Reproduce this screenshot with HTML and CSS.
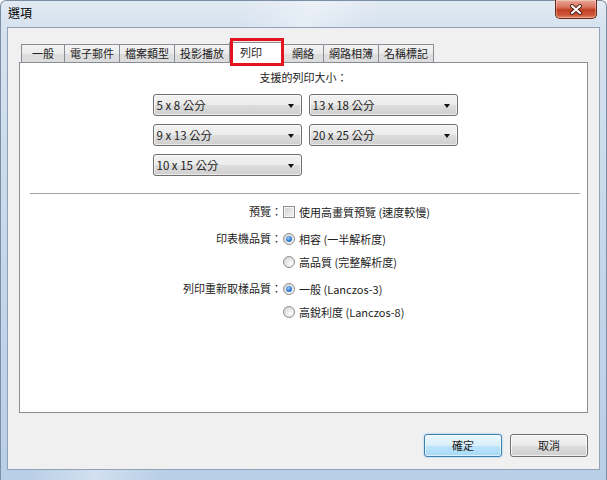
FILE: index.html
```html
<!DOCTYPE html>
<html lang="zh-Hant">
<head>
    <meta charset="utf-8" />
    <title>選項</title>
    <link rel="stylesheet" href="styles.css">
</head>
<body>

<div class="window">
    <div class="titlebar">
        <span class="title">選項</span>
        <span class="close">
            <svg width="14" height="11" viewBox="0 0 14 11">
                <path d="M3 2 L11 9 M11 2 L3 9" stroke="#4b1a10" stroke-width="4" stroke-linecap="round" />
                <path d="M3 2 L11 9 M11 2 L3 9" stroke="#fff" stroke-width="2.2" stroke-linecap="round" />
            </svg>
        </span>
    </div>

    <div class="client">
        <!-- tab strip -->
        <div class="tabs">
            <div class="tab first">一般</div>
            <div class="tab">電子郵件</div>
            <div class="tab">檔案類型</div>
            <div class="tab">投影播放</div>
            <div class="tab selected">列印</div>
            <div class="tab short">網絡</div>
            <div class="tab">網路相簿</div>
            <div class="tab last">名稱標記</div>
        </div>

        <div class="panel">
            <p class="heading">支援的列印大小：</p>
            <div class="sizes">
                <div class="select">5 x 8 公分</div>
                <div class="select">13 x 18 公分</div>
                <div class="select">9 x 13 公分</div>
                <div class="select">20 x 25 公分</div>
                <div class="select">10 x 15 公分</div>
            </div>

            <div class="divider"></div>

            <div class="fields">
                <div class="field">
                    <span class="label">預覽：</span>
                    <div class="choices">
                        <div class="choice"><span class="checkbox"></span>使用高畫質預覽 (速度較慢)</div>
                    </div>
                </div>
                <div class="field">
                    <span class="label">印表機品質：</span>
                    <div class="choices">
                        <div class="choice"><span class="radio on"></span>相容 (一半解析度)</div>
                        <div class="choice"><span class="radio"></span>高品質 (完整解析度)</div>
                    </div>
                </div>
                <div class="field">
                    <span class="label">列印重新取樣品質：</span>
                    <div class="choices">
                        <div class="choice"><span class="radio on"></span>一般 (Lanczos-3)</div>
                        <div class="choice"><span class="radio"></span>高銳利度 (Lanczos-8)</div>
                    </div>
                </div>
            </div>
        </div>

        <div class="buttons">
            <span class="btn default">確定</span>
            <span class="btn">取消</span>
        </div>
    </div>
</div>

</body>
</html>
```

FILE: styles.css
```css
    /* Reset and base font
    ---------------------------------------------------------------- */
    html, body {
        margin: 0;
        padding: 0;
        }
    body {
        font-family: "Noto Sans CJK TC", "Noto Sans", sans-serif;
        font-size: 11px;
        color: #222;
        background: #fff;
        }
    p {
        margin: 0;
        }

    /* Window frame (aero glass)
    ---------------------------------------------------------------- */
    .window {
        width: 607px;
        height: 480px;
        box-sizing: border-box;
        padding: 0 6px 10px;
        border: 1px solid #7c8ea3;
        border-bottom: 0;
        border-radius: 6px 6px 0 0;
        display: flex;
        flex-direction: column;
        background:
            linear-gradient(115deg, rgba(255,255,255,0) 30%, rgba(255,255,255,.35) 38%, rgba(255,255,255,0) 46%),
            linear-gradient(180deg, #e2eaf3 0, #d6e2ef 27px, #c3d6ea 60%, #b9cfe7 100%);
        }
    .titlebar {
        height: 27px;
        display: flex;
        align-items: flex-start;
        }
    .title {
        padding: 4px 0 0 1px;
        font-size: 12px;
        line-height: 16px;
        color: #000;
        }
    .close {
        margin: -1px 3px 0 auto;
        width: 42px;
        height: 19px;
        box-sizing: border-box;
        border: 1px solid #6b2a1c;
        border-top: 0;
        border-radius: 0 0 5px 5px;
        display: flex;
        align-items: center;
        justify-content: center;
        background: linear-gradient(180deg, #e9a999 0, #d9735c 40%, #c13f22 55%, #cf5a3c 85%, #e48a6a 100%);
        box-shadow: inset 0 0 0 1px rgba(255,255,255,.3);
        }

    /* Client area
    ---------------------------------------------------------------- */
    .client {
        flex: 1;
        display: flex;
        flex-direction: column;
        padding: 14px 11px 12px;
        border: 1px solid #8fa2b8;
        background: #f0f0f0;
        }

    /* Tabs */
    .tabs {
        display: flex;
        align-items: flex-end;
        height: 20px;
        margin-left: 2px;
        }
    .tab {
        height: 18px;
        box-sizing: border-box;
        padding: 0 5px;
        line-height: 17px;
        border: 1px solid #898c95;
        border-right: 0;
        border-bottom: 0;
        background: linear-gradient(180deg, #f3f3f3 0, #ebebeb 50%, #dedede 51%, #dcdcdc 100%);
        white-space: nowrap;
        }
    .tab.first { padding: 0 10px; }
    .tab.short { padding: 0 9px; }
    .tab.last  { border-right: 1px solid #898c95; }
    .tab.selected {
        position: relative;
        z-index: 1;
        height: 21px;
        margin-bottom: -1px;
        padding: 0 20px 0 10px;
        line-height: 18px;
        background: #fff;
        }
    /* red highlight round the active tab */
    .tab.selected:after {
        content: "";
        position: absolute;
        top: -5px;
        left: 0;
        right: -2px;
        bottom: -3px;
        border: 3px solid #e3141d;
        }

    .panel {
        height: 351px;
        box-sizing: border-box;
        border: 1px solid #898c95;
        background: #fff;
        }
    .heading {
        margin-top: 5px;
        line-height: 18px;
        text-align: center;
        }

    /* Size drop downs */
    .sizes {
        margin-top: 8px;
        display: grid;
        grid-template-columns: 149px 149px;
        grid-auto-rows: 22px;
        column-gap: 7px;
        row-gap: 8px;
        justify-content: center;
        padding-left: 3px;
        }
    .select {
        position: relative;
        box-sizing: border-box;
        padding-left: 3px;
        line-height: 20px;
        font-size: 11.5px;
        border: 1px solid #707070;
        border-radius: 3px;
        background: linear-gradient(180deg, #f2f2f2 0, #ebebeb 50%, #dddddd 51%, #cfcfcf 100%);
        box-shadow: inset 0 0 0 1px rgba(255,255,255,.6);
        }
    .select:after {
        content: "";
        position: absolute;
        right: 7px;
        top: 9px;
        border-left: 3.5px solid transparent;
        border-right: 3.5px solid transparent;
        border-top: 4px solid #111;
        }

    .divider {
        margin: 17px 7px 0 10px;
        border-top: 1px solid #a0a0a0;
        }

    /* Option rows */
    .fields {
        margin-top: 6px;
        display: flex;
        flex-direction: column;
        gap: 4px;
        }
    .field {
        display: flex;
        }
    .label {
        width: 262px;
        line-height: 23px;
        text-align: right;
        }
    .choices {
        display: flex;
        flex-direction: column;
        margin-left: 1px;
        }
    .choice {
        height: 23px;
        display: flex;
        align-items: center;
        gap: 4px;
        }
    .checkbox {
        width: 12px;
        height: 12px;
        box-sizing: border-box;
        border: 1px solid #8e8f8f;
        background: linear-gradient(135deg, #d2d2d2, #f6f6f6);
        box-shadow: inset 0 0 0 1px #f4f4f4;
        }
    .radio {
        width: 12px;
        height: 12px;
        box-sizing: border-box;
        border: 1px solid #8e8f8f;
        border-radius: 50%;
        background: radial-gradient(circle at 65% 65%, #fdfdfd 0, #dcdcdc 70%);
        display: flex;
        align-items: center;
        justify-content: center;
        }
    .radio.on:after {
        content: "";
        width: 6px;
        height: 6px;
        border-radius: 50%;
        background: radial-gradient(circle at 40% 35%, #9fd0fa 0, #2f7ad0 55%, #1b4f96 100%);
        }

    /* Dialog buttons */
    .buttons {
        margin-top: 21px;
        display: flex;
        justify-content: flex-end;
        gap: 8px;
        }
    .btn {
        width: 78px;
        height: 23px;
        box-sizing: border-box;
        line-height: 21px;
        text-align: center;
        border: 1px solid #707070;
        border-radius: 3px;
        background: linear-gradient(180deg, #f2f2f2 0, #ebebeb 50%, #dddddd 51%, #cfcfcf 100%);
        box-shadow: inset 0 0 0 1px rgba(255,255,255,.7);
        }
    .btn.default {
        border-color: #3c7fb1;
        background: linear-gradient(180deg, #eaf6fd 0, #d9f0fc 50%, #bee6fd 51%, #a7d9f5 100%);
        box-shadow: inset 0 0 0 1px rgba(255,255,255,.6), 0 0 2px #7ec0ee;
        }
```
